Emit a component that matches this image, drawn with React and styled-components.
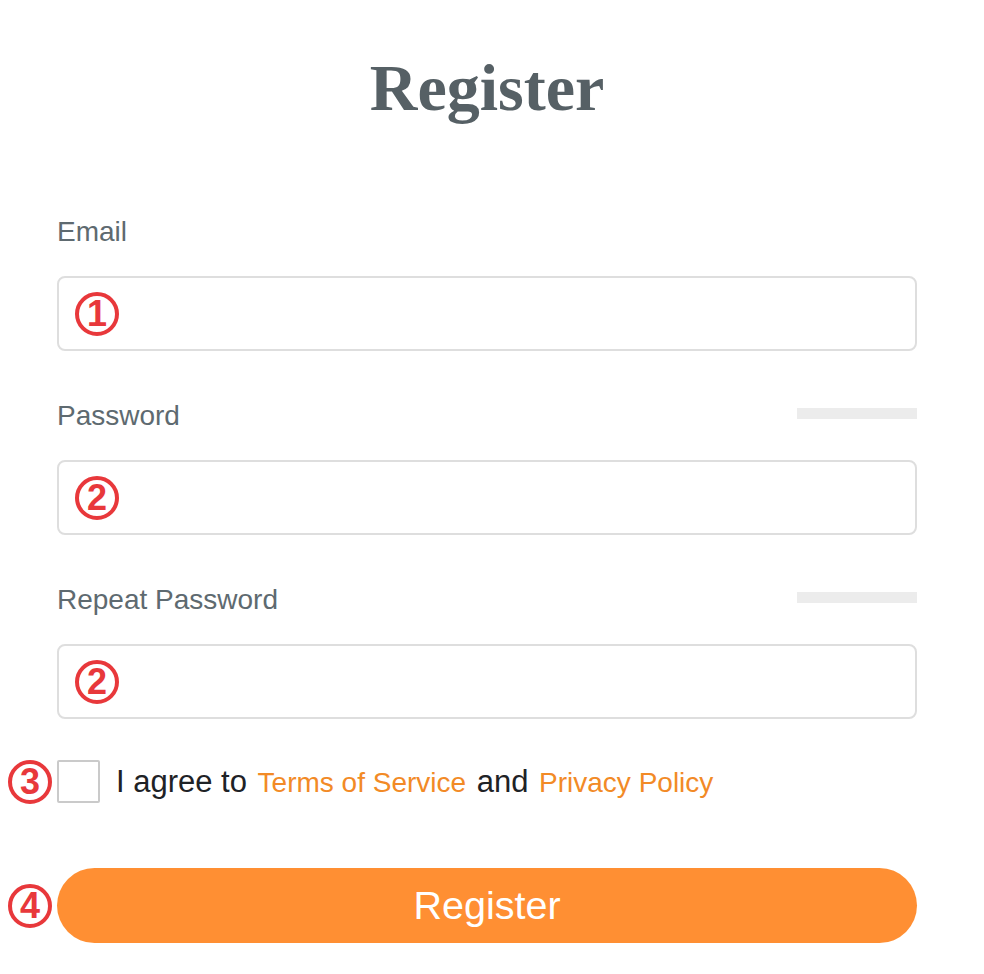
import React from "react";
import styled, { createGlobalStyle } from "styled-components";

const GlobalStyle = createGlobalStyle`
  body {
    margin: 0;
    background: #ffffff;
    font-family: "Liberation Sans", Arial, sans-serif;
  }
`;

const Page = styled.div`
  width: 984px;
  min-height: 974px;
  padding-left: 57px;
  box-sizing: border-box;
`;

const Form = styled.form`
  width: 860px;
  display: flex;
  flex-direction: column;
`;

const Title = styled.h1`
  margin: 48px 0 84px;
  font-family: "Liberation Serif", "Times New Roman", serif;
  font-weight: 700;
  font-size: 66px;
  line-height: 80px;
  color: #566065;
  text-align: center;
`;

const Field = styled.div`
  display: flex;
  flex-direction: column;
  gap: 24px;
  margin-bottom: ${(p) => (p.$last ? "41px" : "45px")};
`;

const LabelRow = styled.div`
  height: 40px;
  display: flex;
  align-items: center;
  justify-content: space-between;
`;

const Label = styled.label`
  font-size: 28px;
  line-height: 40px;
  color: #5e6a70;
`;

const Strength = styled.div`
  width: 120px;
  height: 11px;
  margin-top: -5px;
  background: #ececec;
`;

const InputBox = styled.div`
  height: 75px;
  box-sizing: border-box;
  border: 2px solid #dedede;
  border-radius: 8px;
  display: flex;
  align-items: center;
  gap: 12px;
  padding: 0 16px;
`;

const Input = styled.input`
  flex: 1;
  border: none;
  outline: none;
  height: 100%;
  font-size: 24px;
  font-family: "Liberation Sans", Arial, sans-serif;
  background: transparent;
`;

const Marker = styled.span`
  width: 44px;
  height: 44px;
  box-sizing: border-box;
  border: 4px solid #e8383b;
  border-radius: 50%;
  display: inline-flex;
  align-items: center;
  justify-content: center;
  flex-shrink: 0;
  color: #e8383b;
  font-family: "Liberation Sans", Arial, sans-serif;
  font-weight: 700;
  font-size: 36px;
  line-height: 36px;
  padding-top: 1px;
  background: #fff;
`;

const OutsideMarker = styled(Marker)`
  position: absolute;
  left: -49px;
  top: 50%;
  transform: translateY(-50%);
`;

const AgreeRow = styled.div`
  position: relative;
  display: flex;
  align-items: center;
  gap: 16px;
  height: 43px;
  margin-bottom: 65px;
`;

const Checkbox = styled.span`
  width: 43px;
  height: 43px;
  box-sizing: border-box;
  border: 2px solid #cacaca;
  border-radius: 2px;
  flex-shrink: 0;
`;

const AgreeText = styled.span`
  font-size: 31px;
  color: #1e2226;
  white-space: nowrap;
`;

const Link = styled.a`
  margin: 0 2px;
  font-size: 28px;
  color: #f28a26;
  text-decoration: none;
`;

const ButtonRow = styled.div`
  position: relative;
`;

const SubmitButton = styled.button`
  width: 100%;
  height: 75px;
  border: none;
  border-radius: 38px;
  background: #ff8f33;
  color: #ffffff;
  font-family: "Liberation Sans", Arial, sans-serif;
  font-size: 39.5px;
  cursor: pointer;
`;

function PasswordField({ label, last }) {
  return (
    <Field $last={last}>
      <LabelRow>
        <Label>{label}</Label>
        <Strength />
      </LabelRow>
      <InputBox>
        <Marker>2</Marker>
        <Input type="password" />
      </InputBox>
    </Field>
  );
}

export default function App() {
  return (
    <Page>
      <GlobalStyle />
      <Form onSubmit={(e) => e.preventDefault()}>
        <Title>Register</Title>
        <Field>
          <LabelRow>
            <Label>Email</Label>
          </LabelRow>
          <InputBox>
            <Marker>1</Marker>
            <Input type="email" />
          </InputBox>
        </Field>
        <PasswordField label="Password" />
        <PasswordField label="Repeat Password" last />
        <AgreeRow>
          <OutsideMarker>3</OutsideMarker>
          <Checkbox />
          <AgreeText>
            I agree to <Link href="#">Terms of Service</Link> and{" "}
            <Link href="#">Privacy Policy</Link>
          </AgreeText>
        </AgreeRow>
        <ButtonRow>
          <OutsideMarker>4</OutsideMarker>
          <SubmitButton type="submit">Register</SubmitButton>
        </ButtonRow>
      </Form>
    </Page>
  );
}
